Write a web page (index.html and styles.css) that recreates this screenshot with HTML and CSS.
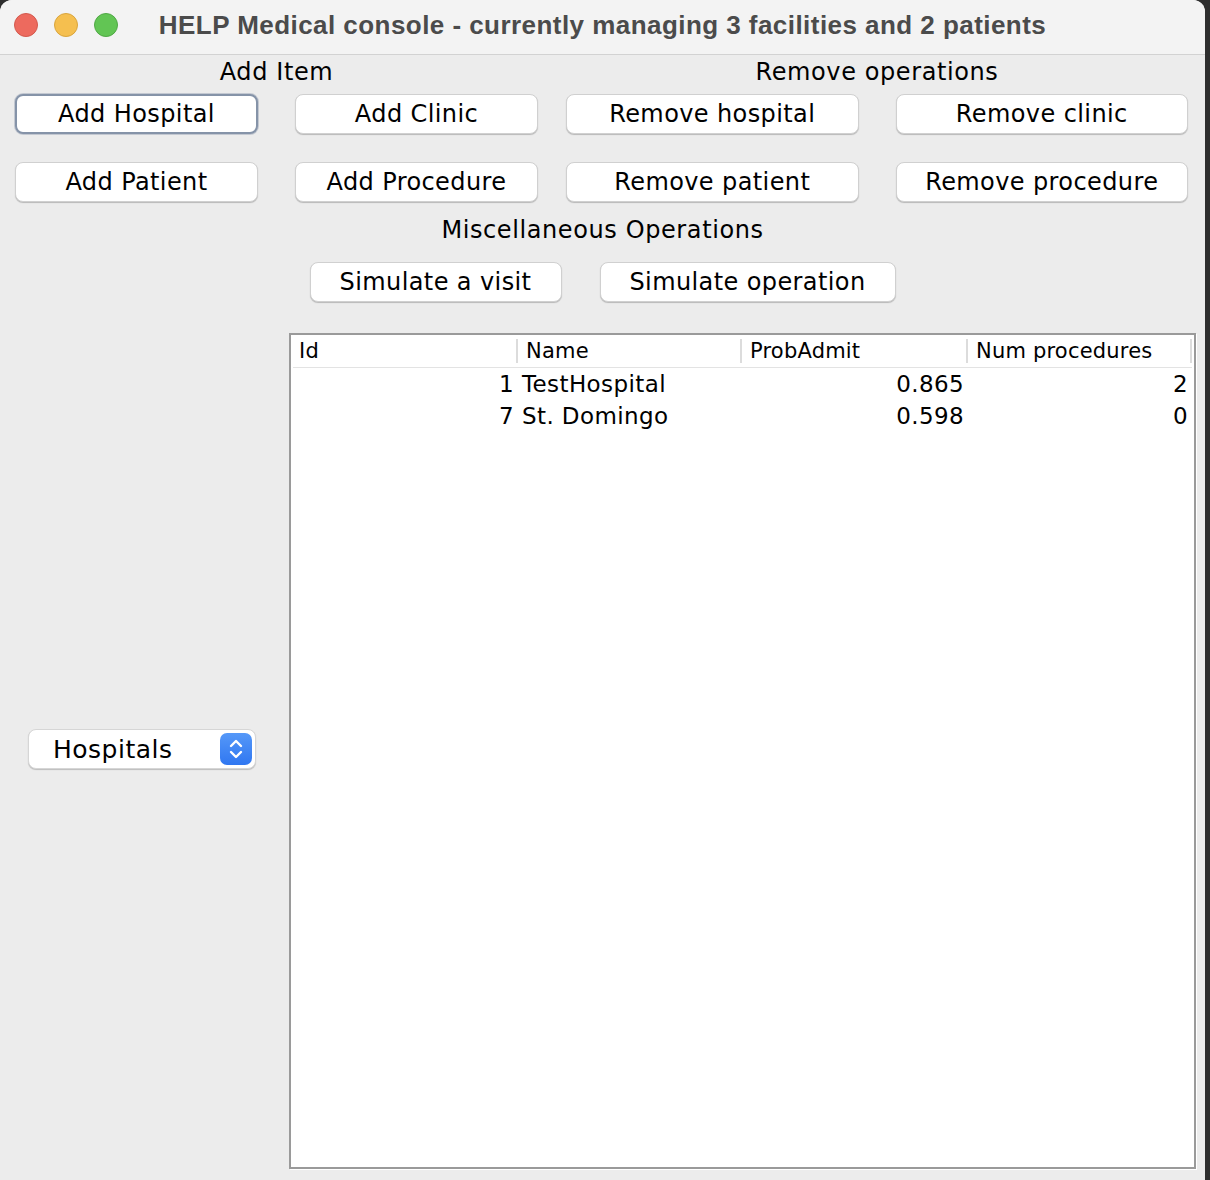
FILE: index.html
```html
<!DOCTYPE html>
<html lang="en">
<head>
<meta charset="utf-8">
<title>HELP Medical console</title>
<link rel="stylesheet" href="styles.css">
</head>
<body>
<div class="window">
  <header class="titlebar">
    <div class="lights">
      <span class="light red"></span>
      <span class="light yellow"></span>
      <span class="light green"></span>
    </div>
    <div class="title">HELP Medical console - currently managing 3 facilities and 2 patients</div>
    <div></div>
  </header>

  <main class="content">
    <div class="top">
      <section class="group group-add">
        <div class="label">Add Item</div>
        <div class="btn-grid">
          <button class="btn focused">Add Hospital</button>
          <button class="btn">Add Clinic</button>
          <button class="btn">Add Patient</button>
          <button class="btn">Add Procedure</button>
        </div>
      </section>
      <section class="group group-remove">
        <div class="label">Remove operations</div>
        <div class="btn-grid">
          <button class="btn">Remove hospital</button>
          <button class="btn">Remove clinic</button>
          <button class="btn">Remove patient</button>
          <button class="btn">Remove procedure</button>
        </div>
      </section>
    </div>

    <section class="misc">
      <div class="label">Miscellaneous Operations</div>
      <div class="misc-row">
        <button class="btn btn-visit">Simulate a visit</button>
        <button class="btn btn-op">Simulate operation</button>
      </div>
    </section>

    <div class="main">
      <div class="side">
        <div class="combo">
          <span class="combo-text">Hospitals</span>
          <span class="stepper">
            <svg width="32" height="32" viewBox="0 0 32 32">
              <path d="M11 13 L16 8 L21 13" fill="none" stroke="#fff" stroke-width="2.4" stroke-linecap="round" stroke-linejoin="round"/>
              <path d="M11 19 L16 24 L21 19" fill="none" stroke="#fff" stroke-width="2.4" stroke-linecap="round" stroke-linejoin="round"/>
            </svg>
          </span>
        </div>
      </div>
      <div class="table">
        <div class="thead">
          <div class="th">Id</div>
          <div class="th">Name</div>
          <div class="th">ProbAdmit</div>
          <div class="th">Num procedures</div>
        </div>
        <div class="tr">
          <div class="td num">1</div>
          <div class="td">TestHospital</div>
          <div class="td num">0.865</div>
          <div class="td num">2</div>
        </div>
        <div class="tr">
          <div class="td num">7</div>
          <div class="td">St. Domingo</div>
          <div class="td num">0.598</div>
          <div class="td num">0</div>
        </div>
      </div>
    </div>
  </main>
</div>
</body>
</html>
```

FILE: styles.css
```css
* { box-sizing: border-box; }

html, body {
  margin: 0;
  padding: 0;
}

body {
  width: 1210px;
  height: 1180px;
  background: #2e2e2e;
  font-family: "DejaVu Sans", "Noto Sans", sans-serif;
  color: #000;
  overflow: hidden;
}

.window {
  width: 1205px;
  height: 1180px;
  background: #ececec;
  border-radius: 12px 12px 0 0;
  overflow: hidden;
  display: flex;
  flex-direction: column;
}

.titlebar {
  height: 55px;
  flex: none;
  background: #f3f3f3;
  border-bottom: 1px solid #d2d2d2;
  display: grid;
  grid-template-columns: 1fr auto 1fr;
  align-items: center;
}

.lights {
  display: flex;
  gap: 16px;
  padding-left: 14px;
  padding-bottom: 4px;
}

.light {
  width: 24px;
  height: 24px;
  border-radius: 50%;
  display: block;
}
.red { background: #ed6a5e; border: 1px solid #d3594d; }
.yellow { background: #f5bf4f; border: 1px solid #d9a53d; }
.green { background: #62c554; border: 1px solid #50a845; }

.title {
  font-family: "Liberation Sans", Arial, sans-serif;
  font-weight: 700;
  font-size: 26px;
  letter-spacing: 0.45px;
  color: #4b4b4b;
  padding-bottom: 4px;
  white-space: nowrap;
}

.content {
  flex: 1;
  display: flex;
  flex-direction: column;
  padding: 1px 10px 11px 0;
}

.label {
  font-size: 24px;
  letter-spacing: 0.6px;
  line-height: 30px;
  padding-top: 1px;
  text-align: center;
}

.top {
  display: flex;
  gap: 28px;
  padding-left: 15px;
}

.group {
  display: flex;
  flex-direction: column;
  gap: 7px;
}

.group-add { width: 523px; }
.group-remove { width: 622px; }

.btn-grid {
  display: grid;
  grid-template-columns: 1fr 1fr;
  column-gap: 37px;
  row-gap: 28px;
}

.btn {
  font-family: inherit;
  font-size: 24px;
  letter-spacing: 0.4px;
  color: #000;
  background: #fff;
  border: 1px solid #d0d0d0;
  border-radius: 8px;
  height: 40px;
  padding: 0 6px;
  box-shadow: 0 1px 1px rgba(0, 0, 0, 0.22);
  white-space: nowrap;
}

.btn.focused {
  border: 2px solid #8593a8;
  box-shadow: 0 0 0 1px rgba(120, 135, 160, 0.35);
}

.misc {
  display: flex;
  flex-direction: column;
  align-items: center;
  padding-left: 10px;
  margin-top: 12px;
  gap: 17px;
}

.misc-row {
  display: flex;
  gap: 38px;
}

.btn-visit { width: 252px; }
.btn-op { width: 296px; }

.main {
  flex: 1;
  display: flex;
  margin-top: 31px;
}

.side {
  width: 289px;
  flex: none;
  display: flex;
  align-items: center;
  justify-content: center;
  padding-right: 5px;
  padding-bottom: 4px;
}

.combo {
  width: 228px;
  height: 40px;
  background: #fff;
  border: 1px solid #d6d6d6;
  border-radius: 8px;
  box-shadow: 0 1px 1px rgba(0, 0, 0, 0.2);
  display: flex;
  align-items: center;
  justify-content: space-between;
  padding: 0 3px 0 24px;
}

.combo-text {
  font-size: 25px;
  letter-spacing: 0.5px;
}

.stepper {
  width: 32px;
  height: 32px;
  border-radius: 7px;
  background: linear-gradient(#5598f8, #3077f1);
  display: flex;
}

.table {
  flex: 1;
  background: #fff;
  border: 2px solid #9a9a9a;
  box-shadow: 1px 1px 0 #fff;
  font-size: 21px;
}

.thead {
  display: grid;
  grid-template-columns: 225px 224px 226px 224px;
  height: 33px;
  border-bottom: 1px solid #e3e3e3;
  margin: 0 2px;
}

.th {
  display: flex;
  align-items: center;
  padding-left: 8px;
  border-right: 2px solid #dcdcdc;
  margin: 4px 0;
  line-height: 24px;
  letter-spacing: 0.2px;
  white-space: nowrap;
}

.th:first-child { padding-left: 6px; }

.tr {
  display: grid;
  grid-template-columns: 225px 224px 226px 224px;
  height: 32px;
  align-items: center;
  margin: 0 2px;
  font-size: 23px;
  letter-spacing: 0.4px;
}

.td {
  padding: 0 4px;
  white-space: nowrap;
}

.td.num { text-align: right; }
```
